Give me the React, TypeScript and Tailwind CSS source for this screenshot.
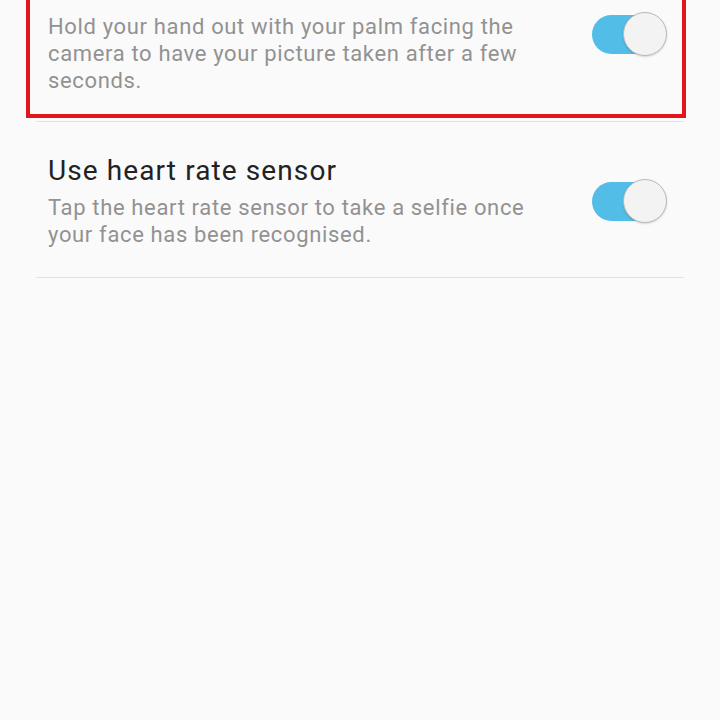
import React from "react";

function Toggle() {
  return (
    <div className="relative h-[44px] w-[75px] shrink-0">
      <div className="absolute left-0 top-[3px] h-[39px] w-[62px] rounded-full bg-[#52bde6]" />
      <div className="absolute right-0 top-0 h-[44px] w-[44px] rounded-full border border-[#b9b9b9] bg-[#f3f3f3] shadow-[0_1px_2px_rgba(0,0,0,0.15)]" />
    </div>
  );
}

function SettingRow({ title, desc, pad }: { title: string; desc: string; pad: string }) {
  return (
    <div className={`mx-[36px] flex items-center border-b border-[#e3e3e3] pl-3 pr-[17px] ${pad}`}>
      <div className="flex-1 pr-6">
        <div className="text-[28px] leading-[34px] tracking-[1.1px] text-[#222222]">{title}</div>
        <div className="mt-[6px] max-w-[490px] text-[22px] leading-[27px] tracking-[0.65px] text-[#929292]">
          {desc}
        </div>
      </div>
      <Toggle />
    </div>
  );
}

export default function App() {
  return (
    <div
      className="relative h-[720px] w-[720px] overflow-hidden bg-[#fafafa]"
      style={{ fontFamily: "Roboto, 'Noto Sans', sans-serif" }}
    >
      <div className="-mt-[57px]">
        <div className="relative">
          <SettingRow
            title="Gesture control"
            desc="Hold your hand out with your palm facing the camera to have your picture taken after a few seconds."
            pad="pt-[30px] pb-[27px]"
          />
          <div className="pointer-events-none absolute bottom-[4px] left-[26px] top-[20px] w-[660px] border-4 border-[#e3141b]" />
        </div>
        <SettingRow
          title="Use heart rate sensor"
          desc="Tap the heart rate sensor to take a selfie once your face has been recognised."
          pad="pt-[32px] pb-[29px]"
        />
      </div>
    </div>
  );
}
